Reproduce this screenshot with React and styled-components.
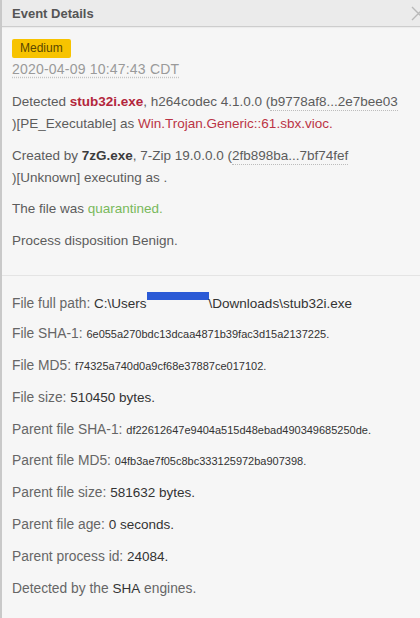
import styled, { createGlobalStyle } from 'styled-components';

const Global = createGlobalStyle`
  html, body {
    margin: 0;
    padding: 0;
    overflow: hidden;
    background: #f6f6f6;
  }
  body {
    font-family: "Liberation Sans", Arial, sans-serif;
  }
`;

const details = [
  { label: 'File full path:', value: 'path' },
  { label: 'File SHA-1:', value: '6e055a270bdc13dcaa4871b39fac3d15a2137225.', hash: true },
  { label: 'File MD5:', value: 'f74325a740d0a9cf68e37887ce017102.', hash: true },
  { label: 'File size:', value: '510450 bytes.' },
  { label: 'Parent file SHA-1:', value: 'df22612647e9404a515d48ebad490349685250de.', hash: true },
  { label: 'Parent file MD5:', value: '04fb3ae7f05c8bc333125972ba907398.', hash: true },
  { label: 'Parent file size:', value: '581632 bytes.' },
  { label: 'Parent file age:', value: '0 seconds.' },
  { label: 'Parent process id:', value: '24084.' },
];

const CloseIcon = () => (
  <svg width="15" height="15" viewBox="0 0 15 15">
    <path d="M1 1 L14 14 M14 1 L1 14" stroke="#b9b9b9" strokeWidth="1.4" fill="none" />
  </svg>
);

const App = () => {
  return (
    <>
      <Global />
      <Panel>
        <Header>
          <Title>Event Details</Title>
          <Close><CloseIcon /></Close>
        </Header>
        <Body>
          <Badge>Medium</Badge>
          <Stamp>2020-04-09 10:47:43 CDT</Stamp>

          {/* the sha tooltip span always pushes the ")" onto its own line */}
          <Para>
            Detected <Bad>stub32i.exe</Bad>, h264codec 4.1.0.0 (<Hash>b9778af8...2e7bee03</Hash>
            <br />)[PE_Executable] as <Threat>Win.Trojan.Generic::61.sbx.vioc.</Threat>
          </Para>
          <Para>
            Created by <Strong>7zG.exe</Strong>, 7-Zip 19.0.0.0 (<Hash>2fb898ba...7bf74fef</Hash>
            <br />)[Unknown] executing as .
          </Para>
          <Para>
            The file was <Good>quarantined.</Good>
          </Para>
          <Para>Process disposition Benign.</Para>
        </Body>

        <Divider />

        <Body>
          {details.map((d) => (
            <Row key={d.label}>
              {d.label}{' '}
              {d.value === 'path' ? (
                <Value>
                  C:\Users<Redact />\Downloads\stub32i.exe
                </Value>
              ) : (
                <Value small={d.hash}>{d.value}</Value>
              )}
            </Row>
          ))}
          <Row>
            Detected by the <Value>SHA</Value> engines.
          </Row>
        </Body>
      </Panel>
    </>
  );
};

export default App;

const Panel = styled.div`
  min-height: 618px;
  border-left: 2px solid #c9c9c9;
  background: #f6f6f6;
  color: #5f5f5f;
`;

const Header = styled.div`
  height: 26px;
  display: flex;
  align-items: center;
  justify-content: space-between;
  padding-left: 10px;
  background: #ebebeb;
  border-bottom: 1px solid #cdcdcd;
  box-shadow: 0 1px 1px rgba(0, 0, 0, 0.04);
`;

const Title = styled.div`
  font-size: 13px;
  font-weight: 700;
  color: #555;
`;

const Close = styled.div`
  display: flex;
  margin-right: -6px;
  margin-top: 1px;
`;

const Body = styled.div`
  padding: 11px 16px 0 10px;
`;

const Badge = styled.span`
  display: inline-block;
  height: 19px;
  line-height: 19px;
  padding: 0 8px;
  border-radius: 2px;
  background: #f7c300;
  color: #5b4800;
  font-size: 12px;
`;

const Stamp = styled.div`
  margin-top: 1px;
  font-size: 14px;
  line-height: 20px;
  color: #9a9a9a;
  letter-spacing: 0.2px;
  text-decoration: underline dotted #c4c4c4;
  text-underline-offset: 3px;
  width: max-content;
  margin-bottom: 12px;
`;

const Para = styled.p`
  margin: 0 0 9.5px;
  font-size: 13.5px;
  line-height: 22px;
  color: #5c5c5c;
`;

const Bad = styled.b`
  color: #b3263c;
`;

const Threat = styled.span`
  color: #bb3445;
`;

const Strong = styled.b`
  color: #3c3c3c;
`;

const Good = styled.span`
  color: #79b95b;
`;

const Hash = styled.span`
  border-bottom: 1px dotted #bcbcbc;
  padding-bottom: 1px;
`;

const Divider = styled.hr`
  margin: 23px 0 5px;
  border: 0;
  border-top: 1px solid #e4e4e4;
`;

const Row = styled.p`
  margin: 0 0 9.8px;
  font-size: 13.8px;
  line-height: 22px;
  height: 22px;
  color: #666;
`;

const Value = styled.span`
  color: #333;
  font-size: ${(p) => (p.small ? '11px' : '13.5px')};
  line-height: 1;
`;

const Redact = styled.span`
  display: inline-block;
  width: 62px;
  height: 8px;
  background: #2b5ad6;
  vertical-align: 8px;
`;
